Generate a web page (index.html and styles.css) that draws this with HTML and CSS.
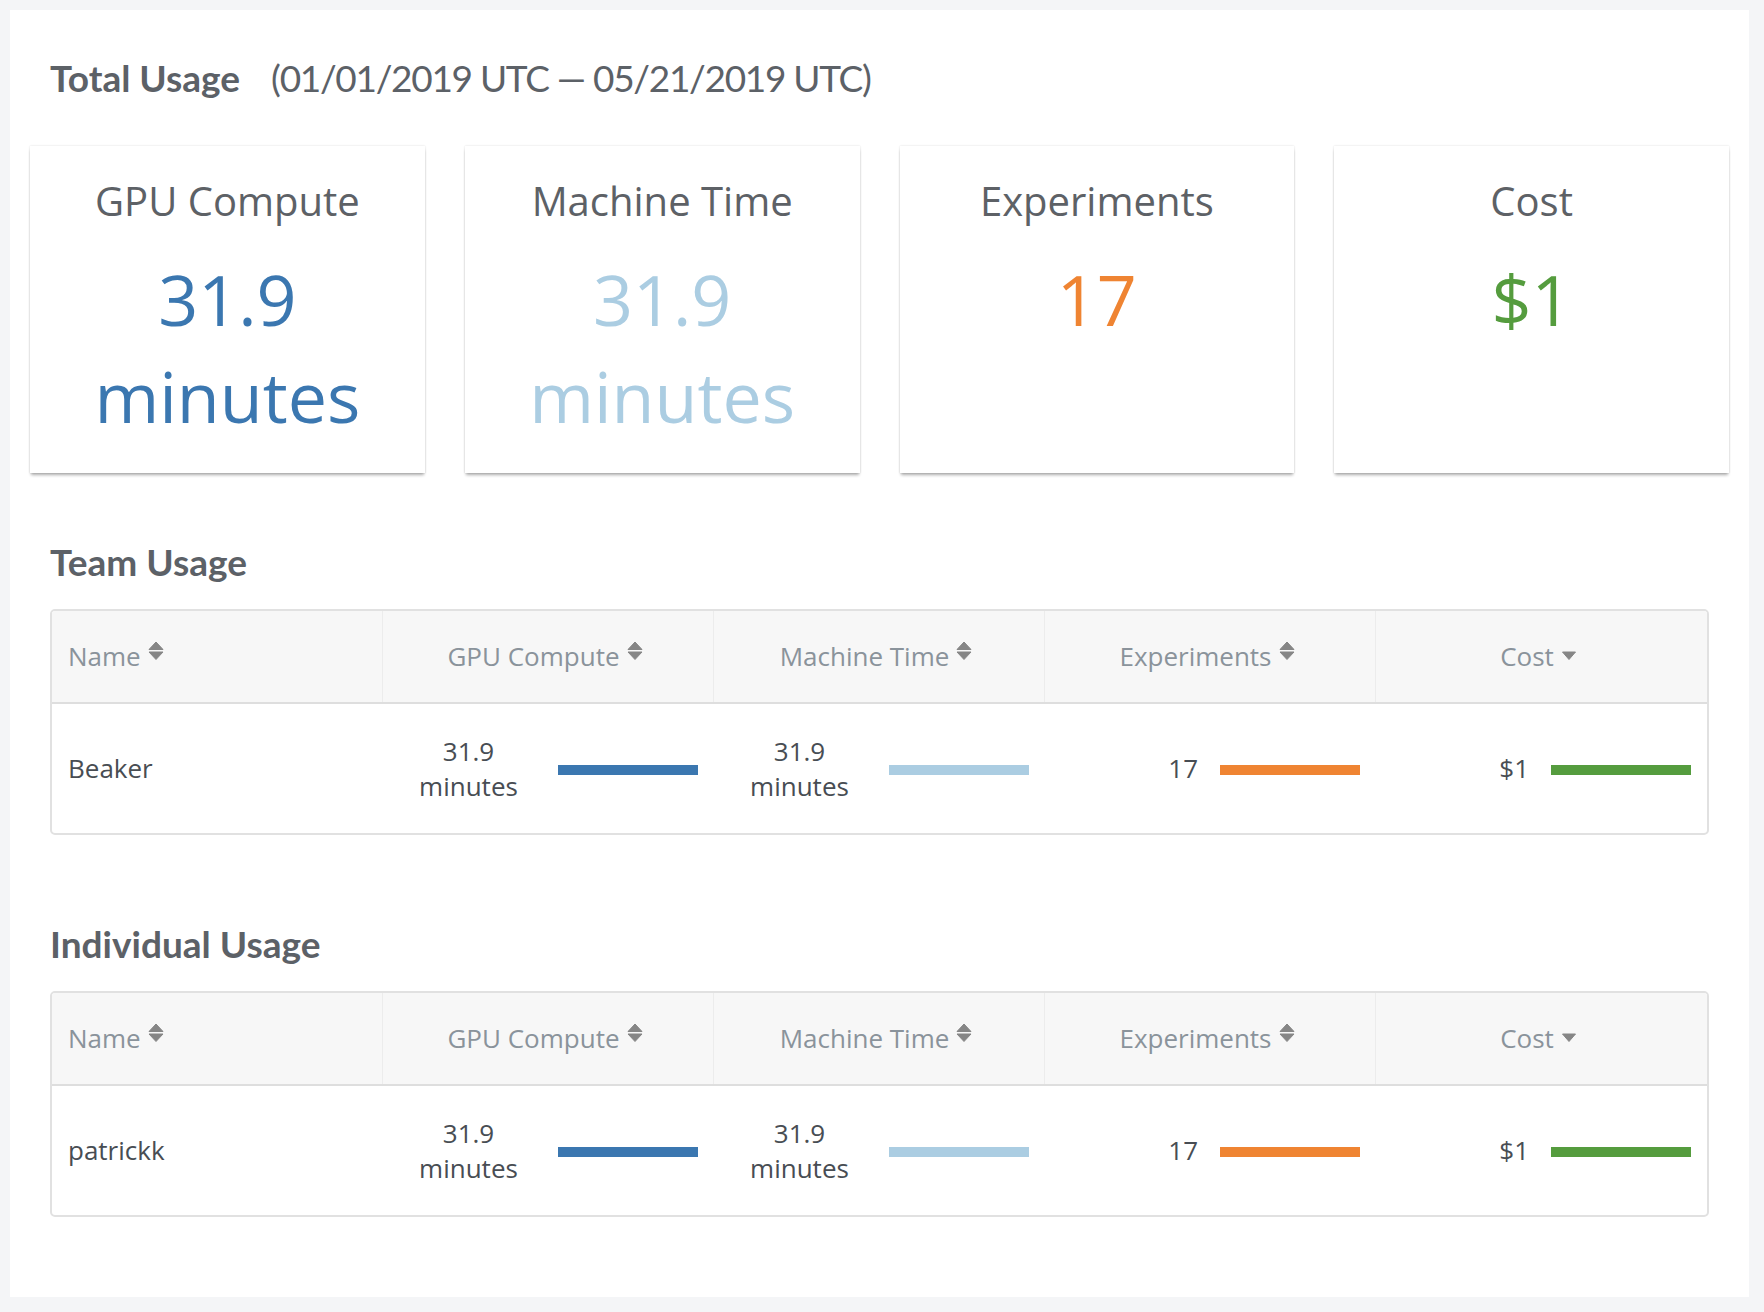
FILE: index.html
```html
<!DOCTYPE html>
<html lang="en">
<head>
<meta charset="utf-8">
<title>Usage</title>
<link rel="stylesheet" href="styles.css">
</head>
<body>
<div class="panel">
  <h1 class="heading total-heading"><span class="heading-strong">Total Usage</span><span class="heading-range">(01/01/2019 UTC — 05/21/2019 UTC)</span></h1>

  <div class="cards">
    <div class="card">
      <div class="card-title">GPU Compute</div>
      <div class="card-value blue">31.9<br>minutes</div>
    </div>
    <div class="card">
      <div class="card-title">Machine Time</div>
      <div class="card-value lightblue">31.9<br>minutes</div>
    </div>
    <div class="card">
      <div class="card-title">Experiments</div>
      <div class="card-value orange">17</div>
    </div>
    <div class="card">
      <div class="card-title">Cost</div>
      <div class="card-value green">$1</div>
    </div>
  </div>

  <section class="section">
    <h2 class="heading section-heading">Team Usage</h2>
    <div class="table">
      <div class="thead">
        <div class="th th-left">Name<svg class="sort" viewBox="0 0 16 19"><path d="M8 1 L15 8.5 H1 Z"/><path d="M1 11 H15 L8 18.5 Z"/></svg></div>
        <div class="th">GPU Compute<svg class="sort" viewBox="0 0 16 19"><path d="M8 1 L15 8.5 H1 Z"/><path d="M1 11 H15 L8 18.5 Z"/></svg></div>
        <div class="th">Machine Time<svg class="sort" viewBox="0 0 16 19"><path d="M8 1 L15 8.5 H1 Z"/><path d="M1 11 H15 L8 18.5 Z"/></svg></div>
        <div class="th">Experiments<svg class="sort" viewBox="0 0 16 19"><path d="M8 1 L15 8.5 H1 Z"/><path d="M1 11 H15 L8 18.5 Z"/></svg></div>
        <div class="th th-last">Cost<svg class="sort" viewBox="0 0 16 19"><path d="M1.5 11 H14.5 L8 18.5 Z"/></svg></div>
      </div>
      <div class="trow">
        <div class="td td-name">Beaker</div>
        <div class="td td-val"><span class="val">31.9 minutes</span><span class="bar"><span class="fill blue-bg" style="width:100%"></span></span></div>
        <div class="td td-val"><span class="val">31.9 minutes</span><span class="bar"><span class="fill lightblue-bg" style="width:100%"></span></span></div>
        <div class="td td-val"><span class="val">17</span><span class="bar"><span class="fill orange-bg" style="width:100%"></span></span></div>
        <div class="td td-val"><span class="val">$1</span><span class="bar"><span class="fill green-bg" style="width:100%"></span></span></div>
      </div>
    </div>
  </section>

  <section class="section">
    <h2 class="heading section-heading">Individual Usage</h2>
    <div class="table">
      <div class="thead">
        <div class="th th-left">Name<svg class="sort" viewBox="0 0 16 19"><path d="M8 1 L15 8.5 H1 Z"/><path d="M1 11 H15 L8 18.5 Z"/></svg></div>
        <div class="th">GPU Compute<svg class="sort" viewBox="0 0 16 19"><path d="M8 1 L15 8.5 H1 Z"/><path d="M1 11 H15 L8 18.5 Z"/></svg></div>
        <div class="th">Machine Time<svg class="sort" viewBox="0 0 16 19"><path d="M8 1 L15 8.5 H1 Z"/><path d="M1 11 H15 L8 18.5 Z"/></svg></div>
        <div class="th">Experiments<svg class="sort" viewBox="0 0 16 19"><path d="M8 1 L15 8.5 H1 Z"/><path d="M1 11 H15 L8 18.5 Z"/></svg></div>
        <div class="th th-last">Cost<svg class="sort" viewBox="0 0 16 19"><path d="M1.5 11 H14.5 L8 18.5 Z"/></svg></div>
      </div>
      <div class="trow">
        <div class="td td-name">patrickk</div>
        <div class="td td-val"><span class="val">31.9 minutes</span><span class="bar"><span class="fill blue-bg" style="width:100%"></span></span></div>
        <div class="td td-val"><span class="val">31.9 minutes</span><span class="bar"><span class="fill lightblue-bg" style="width:100%"></span></span></div>
        <div class="td td-val"><span class="val">17</span><span class="bar"><span class="fill orange-bg" style="width:100%"></span></span></div>
        <div class="td td-val"><span class="val">$1</span><span class="bar"><span class="fill green-bg" style="width:100%"></span></span></div>
      </div>
    </div>
  </section>
</div>
</body>
</html>
```

FILE: styles.css
```css
* { box-sizing: border-box; }

html, body {
  margin: 0;
  padding: 0;
}

body {
  background: #f4f5f7;
  padding: 10px 15px 14px 10px;
  font-family: "Open Sans", "Noto Sans", sans-serif;
  color: #4a4f55;
}

.panel {
  background: #ffffff;
  padding: 46px 20px 80px 20px;
}

.heading {
  margin: 0;
  font-family: "Lato", "Open Sans", sans-serif;
  font-size: 37px;
  line-height: 44px;
  color: #5c6167;
  padding-left: 20px;
}

.heading-strong {
  font-weight: 700;
}

.heading-range {
  font-weight: 400;
  margin-left: 31px;
  letter-spacing: -1.3px;
}

.total-heading {
  margin-bottom: 46px;
}

.cards {
  display: flex;
  gap: 40px;
}

.card {
  flex: 1 1 0;
  background: #fff;
  min-height: 327px;
  padding: 28px 10px 28px;
  text-align: center;
  box-shadow: 0 3px 3px -1px rgba(0, 0, 0, 0.32), 0 0 2px rgba(0, 0, 0, 0.14);
}

.card-title {
  font-size: 40px;
  line-height: 54px;
  color: #5d6166;
}

.card-value {
  margin-top: 23px;
  font-size: 70px;
  line-height: 97px;
}

.blue { color: #3b77b0; }
.lightblue { color: #abcde2; }
.orange { color: #ef8432; }
.green { color: #559c3e; }

.blue-bg { background: #3b77b0; }
.lightblue-bg { background: #abcde2; }
.orange-bg { background: #ef8432; }
.green-bg { background: #559c3e; }

.section {
  margin-top: 67px;
}

.section + .section {
  margin-top: 87px;
}

.section-heading {
  margin-bottom: 25px;
}

.table {
  margin: 0 20px;
  border: 2px solid #e1e1e1;
  border-radius: 5px;
  overflow: hidden;
  font-size: 26px;
  line-height: 35px;
}

.thead {
  display: grid;
  grid-template-columns: repeat(5, 1fr);
  background: #f7f7f7;
  border-bottom: 2px solid #dedede;
  height: 93px;
}

.th {
  display: flex;
  align-items: center;
  justify-content: center;
  padding: 0 22px 0 16px;
  color: #8a939b;
  border-right: 1px solid #ececec;
}

.th-left {
  justify-content: flex-start;
}

.th-last {
  border-right: none;
}

.sort {
  width: 16px;
  height: 19px;
  margin-left: 7px;
  margin-bottom: 13px;
  fill: #868686;
  stroke: #868686;
  stroke-width: 1;
  stroke-linejoin: round;
  flex: none;
}

.trow {
  display: grid;
  grid-template-columns: repeat(5, 1fr);
  height: 129px;
}

.td {
  display: flex;
  align-items: center;
  padding: 0 16px 0 16px;
  color: #484d53;
}

.td-val {
  justify-content: flex-end;
}

.val {
  max-width: 135px;
  text-align: center;
  margin-right: 22px;
}

.bar {
  display: block;
  width: 140px;
  height: 10px;
  margin-top: 2px;
  flex: none;
}

.fill {
  display: block;
  height: 100%;
}
```
